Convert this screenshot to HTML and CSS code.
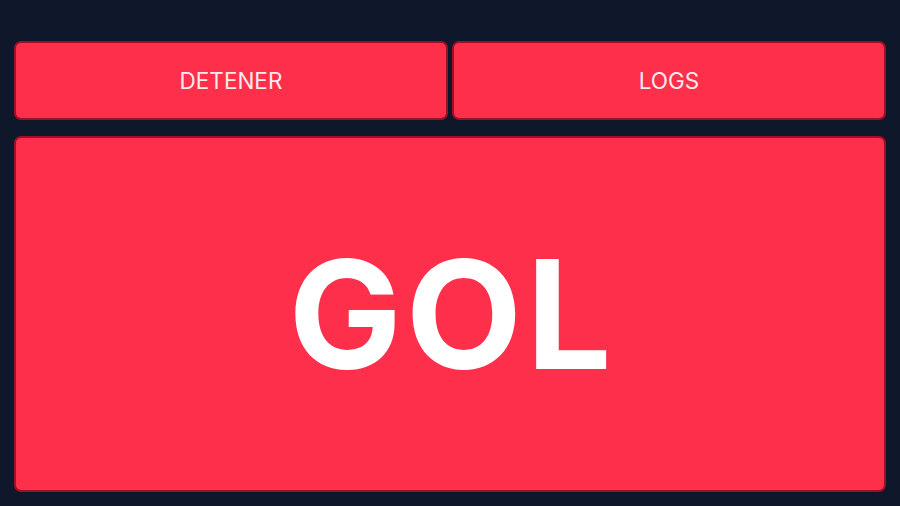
FILE: index.html
```html
<!DOCTYPE html>
<html lang="es">
<head>
<meta charset="utf-8">
<title>GOL</title>
<link rel="stylesheet" href="styles.css">
</head>
<body>
<main class="app">
  <div class="actions">
    <button class="btn">DETENER</button>
    <button class="btn">LOGS</button>
  </div>
  <section class="goal"><span class="goal-text">GOL</span></section>
</main>
</body>
</html>
```
FILE: styles.css
```css
* { box-sizing: border-box; }
html, body { margin: 0; height: 100%; }
body {
  background: #0f172a;
  font-family: Inter, "Noto Sans", sans-serif;
}
.app {
  height: 506px;
  padding: 41px 14px 14px;
  display: flex;
  flex-direction: column;
  gap: 16px;
}
.actions {
  display: grid;
  grid-template-columns: 1fr 1fr;
  gap: 4px;
  height: 79px;
}
.btn {
  background: #fe2f4b;
  border: 2px solid #9f0f26;
  border-radius: 7px;
  color: rgba(255, 255, 255, 0.92);
  font-family: Inter, "Noto Sans", sans-serif;
  font-size: 22.5px;
  font-weight: 400;
  padding: 0;
}
.goal {
  flex: 1;
  background: #fe2f4b;
  border: 2px solid #9f0f26;
  border-radius: 7px;
  color: #fff;
  font-size: 151px;
  font-weight: 700;
  display: flex;
  align-items: center;
  justify-content: center;
  line-height: 1;
}
.goal-text {
  letter-spacing: 4px;
  margin-right: -4px;
}
```
